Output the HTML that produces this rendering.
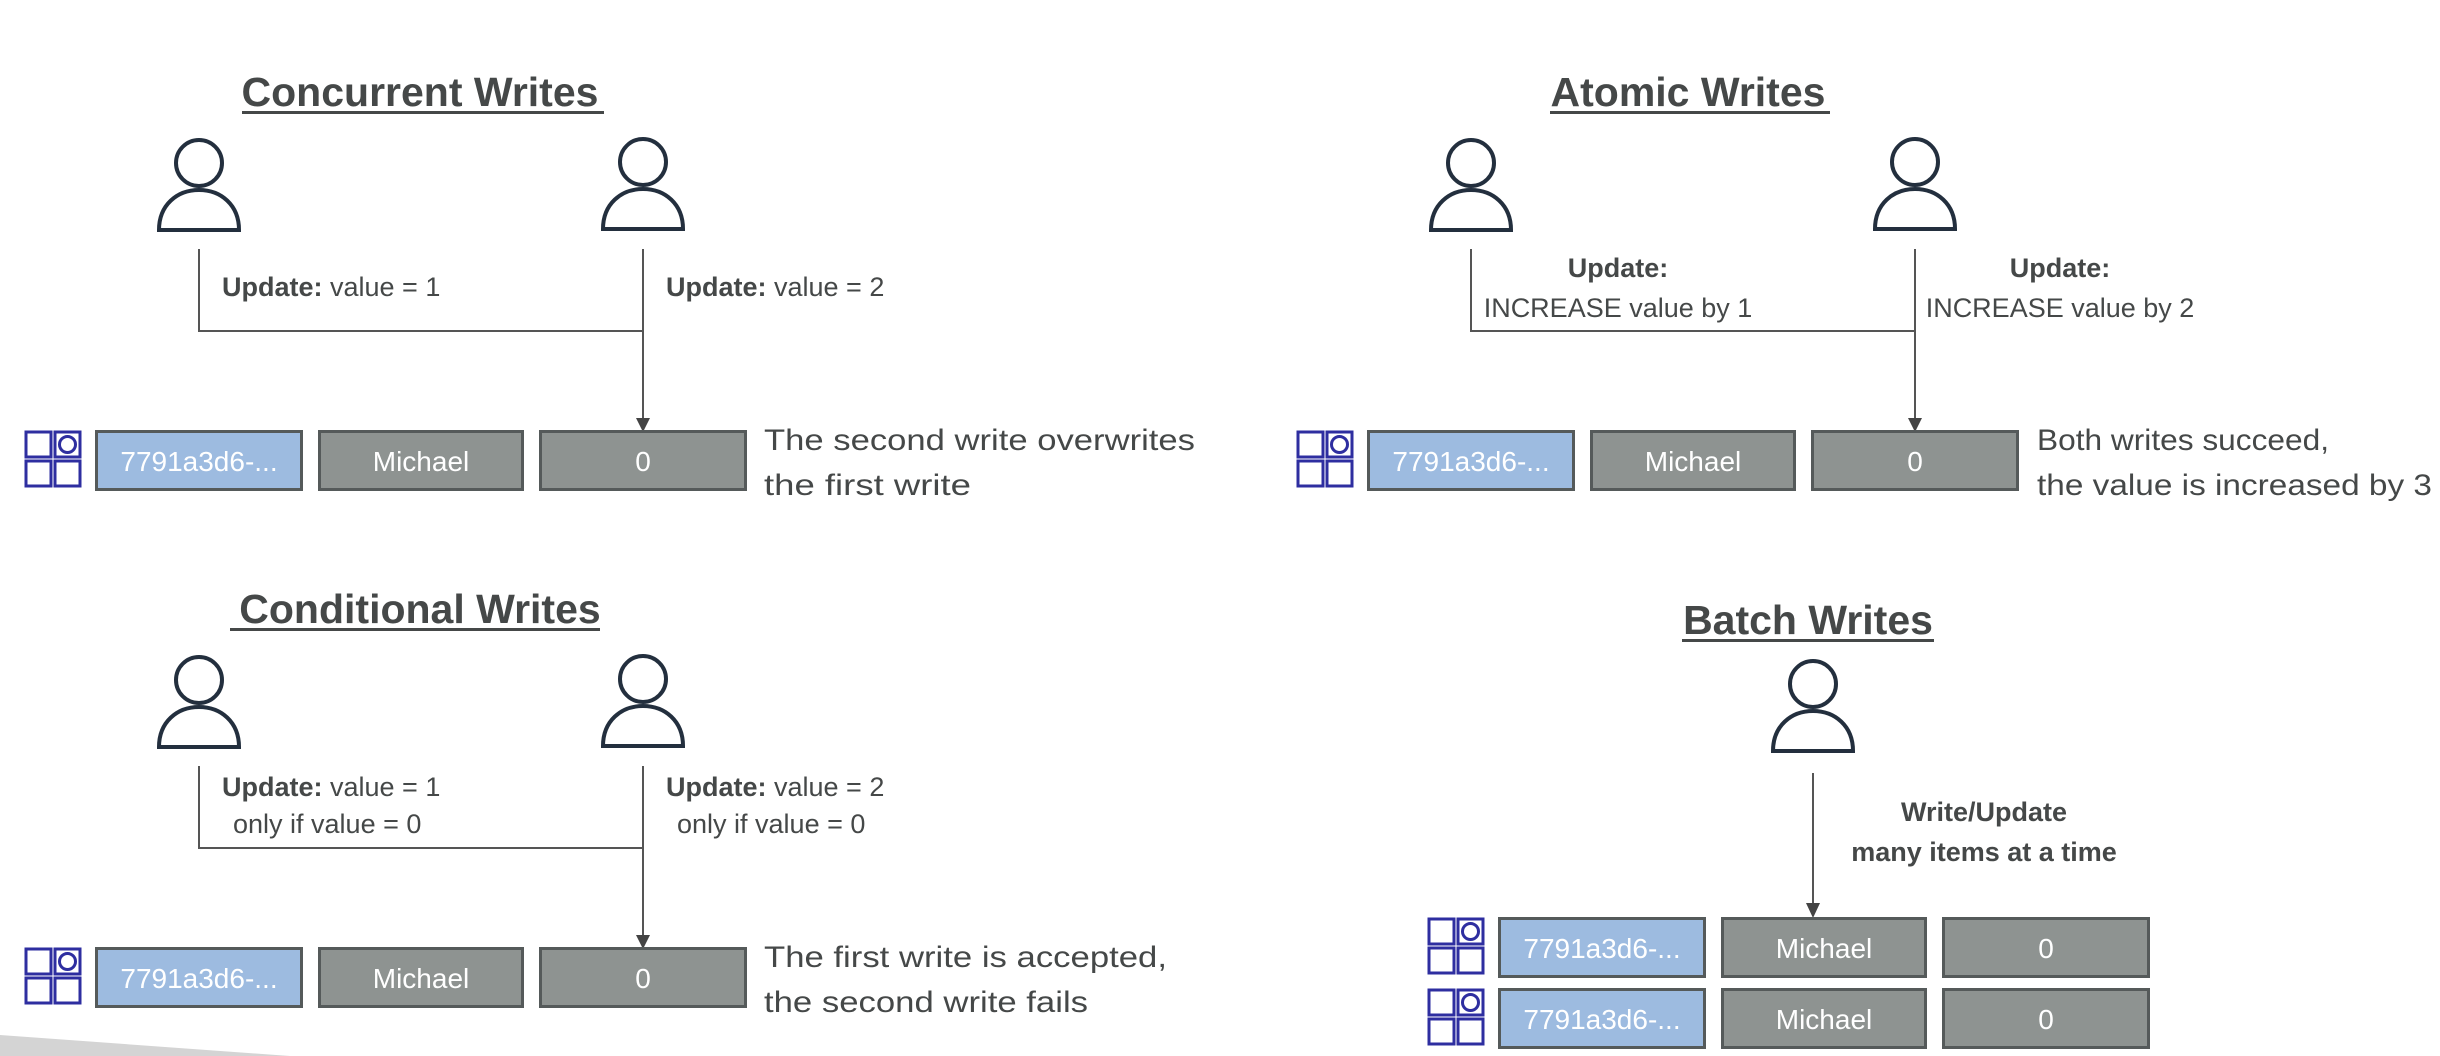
<!DOCTYPE html>
<html><head><meta charset="utf-8"><style>
html,body{margin:0;padding:0;background:#fff;width:2440px;height:1056px;overflow:hidden}
svg{display:block;font-family:"Liberation Sans",sans-serif}
.t{font-size:41px;font-weight:bold;fill:#454848}
.l{font-size:27px;fill:#454848}
.b{font-weight:bold}
.d{font-size:30px;fill:#454848}
.c{font-size:28px;fill:#fff}
</style></head><body>
<svg width="2440" height="1056" viewBox="0 0 2440 1056">
<defs>
<g id="user" fill="none" stroke="#232f3e" stroke-width="4">
<circle cx="0" cy="0" r="23"/>
<path d="M-40 67 C-40 42 -22 27 0 27 C22 27 40 42 40 67 Z"/>
</g>
<g id="tico" fill="none" stroke="#2e2ea0" stroke-width="3">
<rect x="0" y="0" width="25" height="25"/><rect x="29" y="0" width="25" height="25"/>
<rect x="0" y="29" width="25" height="25"/><rect x="29" y="29" width="25" height="25"/>
<circle cx="41.5" cy="12.5" r="8"/>
</g>
<g id="row">
<use href="#tico" x="-69" y="2"/>
<rect x="1.5" y="1.5" width="205" height="58" fill="#9dbbe0" stroke="#555a5a" stroke-width="3"/>
<rect x="224.5" y="1.5" width="203" height="58" fill="#8e9391" stroke="#555a5a" stroke-width="3"/>
<rect x="445.5" y="1.5" width="205" height="58" fill="#8e9391" stroke="#555a5a" stroke-width="3"/>
<text class="c" x="104" y="41" text-anchor="middle">7791a3d6-...</text>
<text class="c" x="326" y="41" text-anchor="middle">Michael</text>
<text class="c" x="548" y="41" text-anchor="middle">0</text>
</g>
<g id="flow" stroke="#555" stroke-width="2" fill="none">
<path d="M199 249 V331 H643 M643 249 V420"/>
<path d="M636 418 L650 418 L643 432 Z" fill="#444" stroke="none"/>
</g>
</defs>

<polygon points="0,1035 0,1056 290,1056" fill="#d4d4d4"/>

<!-- Concurrent -->
<text class="t" x="420" y="106" text-anchor="middle">Concurrent Writes</text>
<rect x="242" y="111" width="362" height="3" fill="#454848"/>
<use href="#user" x="199" y="163"/><use href="#user" x="643" y="162"/>
<use href="#flow"/>
<text class="l" x="222" y="296"><tspan class="b">Update:</tspan> value = 1</text>
<text class="l" x="666" y="296"><tspan class="b">Update:</tspan> value = 2</text>
<use href="#row" x="95" y="430"/>
<text class="d" x="764" y="450" textLength="431" lengthAdjust="spacingAndGlyphs">The second write overwrites</text>
<text class="d" x="764" y="495" textLength="207" lengthAdjust="spacingAndGlyphs">the first write</text>

<!-- Atomic -->
<text class="t" x="1688" y="106" text-anchor="middle">Atomic Writes</text>
<rect x="1550" y="111" width="280" height="3" fill="#454848"/>
<use href="#user" x="1471" y="163"/><use href="#user" x="1915" y="162"/>
<use href="#flow" x="1272"/>
<text class="l b" x="1618" y="277" text-anchor="middle">Update:</text>
<text class="l" x="1618" y="317" text-anchor="middle">INCREASE value by 1</text>
<text class="l b" x="2060" y="277" text-anchor="middle">Update:</text>
<text class="l" x="2060" y="317" text-anchor="middle">INCREASE value by 2</text>
<use href="#row" x="1367" y="430"/>
<text class="d" x="2037" y="450" textLength="292" lengthAdjust="spacingAndGlyphs">Both writes succeed,</text>
<text class="d" x="2037" y="495" textLength="395" lengthAdjust="spacingAndGlyphs">the value is increased by 3</text>

<!-- Conditional -->
<text class="t" x="420" y="623" text-anchor="middle">Conditional Writes</text>
<rect x="230" y="628" width="370" height="3" fill="#454848"/>
<use href="#user" x="199" y="680"/><use href="#user" x="643" y="679"/>
<use href="#flow" y="517"/>
<text class="l" x="222" y="796"><tspan class="b">Update:</tspan> value = 1</text>
<text class="l" x="233" y="833">only if value = 0</text>
<text class="l" x="666" y="796"><tspan class="b">Update:</tspan> value = 2</text>
<text class="l" x="677" y="833">only if value = 0</text>
<use href="#row" x="95" y="947"/>
<text class="d" x="764" y="967" textLength="403" lengthAdjust="spacingAndGlyphs">The first write is accepted,</text>
<text class="d" x="764" y="1012" textLength="324" lengthAdjust="spacingAndGlyphs">the second write fails</text>

<!-- Batch -->
<text class="t" x="1808" y="634" text-anchor="middle">Batch Writes</text>
<rect x="1682" y="639" width="252" height="3" fill="#454848"/>
<use href="#user" x="1813" y="684"/>
<path d="M1813 773 V905" stroke="#555" stroke-width="2" fill="none"/>
<path d="M1806 903 L1820 903 L1813 918 Z" fill="#444"/>
<text class="l b" x="1984" y="821" text-anchor="middle">Write/Update</text>
<text class="l b" x="1984" y="861" text-anchor="middle">many items at a time</text>
<use href="#row" x="1498" y="917"/>
<use href="#row" x="1498" y="988"/>
</svg>
</body></html>
